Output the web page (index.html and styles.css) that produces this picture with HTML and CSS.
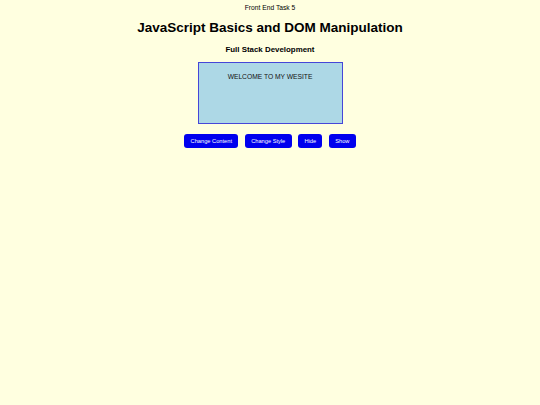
FILE: index.html
```html
<!DOCTYPE html>
<html>
<head>
<meta charset="utf-8">
<link rel="stylesheet" href="styles.css">
</head>
<body>
<div class="page">
  <p class="task">Front End Task 5</p>
  <h1 class="title">JavaScript Basics and DOM Manipulation</h1>
  <h2 class="subtitle">Full Stack Development</h2>
  <div class="box">WELCOME TO MY WESITE</div>
  <div class="buttons">
    <button class="btn">Change Content</button>
    <button class="btn">Change Style</button>
    <button class="btn">Hide</button>
    <button class="btn">Show</button>
  </div>
</div>
</body>
</html>
```
FILE: styles.css
```css
html, body {
  margin: 0;
  padding: 0;
  background: #ffffe0;
  height: 100%;
}
.page {
  display: flex;
  flex-direction: column;
  align-items: center;
  font-family: "Liberation Sans", Arial, sans-serif;
  color: #000;
  padding-top: 4px;
}
.task {
  margin: 0;
  font-size: 6.7px;
  line-height: 8px;
}
.title {
  margin: 8px 0 0 0;
  font-size: 13.5px;
  line-height: 16px;
  font-weight: bold;
}
.subtitle {
  margin: 9px 0 0 0;
  font-size: 7.9px;
  line-height: 10px;
  font-weight: bold;
}
.box {
  margin-top: 7px;
  width: 143px;
  height: 50px;
  box-sizing: content-box;
  border: 1.5px solid #4646d8;
  background: #add8e6;
  font-size: 6.7px;
  line-height: 8px;
  text-align: center;
  padding-top: 10px;
  color: #111;
}
.buttons {
  display: flex;
  gap: 6.5px;
  margin-top: 10px;
}
.btn {
  background: #0000ee;
  color: #fff;
  border: none;
  border-radius: 3px;
  font-family: "Liberation Sans", Arial, sans-serif;
  font-size: 5.7px;
  height: 14px;
  padding: 0 6.3px;
  margin: 0;
}
```
